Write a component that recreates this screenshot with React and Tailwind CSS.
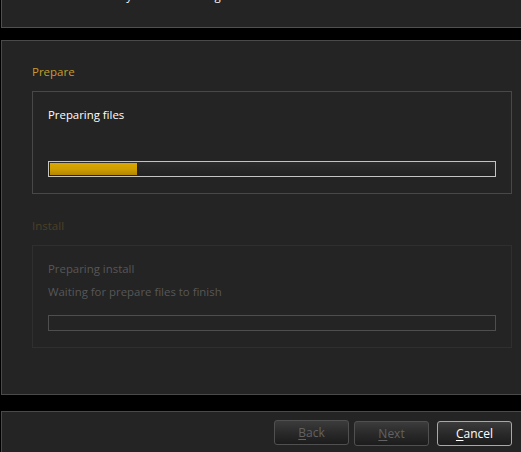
import React from 'react';

const font = { fontFamily: '"Open Sans", "Noto Sans", sans-serif' };

const Bar = ({ value, active }) => (
  <div
    className={
      'h-[16px] border p-px ' +
      (active
        ? 'border-[#c4c4c4] bg-gradient-to-b from-[#2c2c2c] to-[#222222]'
        : 'border-[#4e4e4e] bg-[#242424]')
    }
  >
    {value > 0 && (
      <div
        className="h-full bg-gradient-to-b from-[#d9a800] via-[#cf9e00] to-[#b38600]"
        style={{ width: value + '%' }}
      />
    )}
  </div>
);

const Step = ({ title, line1, line2, value, active }) => (
  <div>
    <div
      className={
        'h-4 leading-4 text-[11.5px] ' + (active ? 'text-[#c59d2c]' : 'text-[#4b4027]')
      }
    >
      {title}
    </div>
    <div
      className={
        'mt-[11px] border px-[15px] pt-[11px] pb-[16px] ' +
        (active ? 'border-[#484848]' : 'border-[#2f2f2f]')
      }
    >
      <div
        className={
          'text-[11.4px] leading-[23px] ' + (active ? 'text-white' : 'text-[#575757]')
        }
      >
        <div className="h-[23px]">{line1}</div>
        <div className="h-[23px]">{line2}</div>
      </div>
      <div className="mt-[12px]">
        <Bar value={value} active={active} />
      </div>
    </div>
  </div>
);

const Btn = ({ label, hot, enabled }) => (
  <button
    type="button"
    className={
      'w-[75px] h-[25px] rounded-[3px] border text-[12px] leading-none pt-px bg-gradient-to-b from-[#3c3c3c] via-[#2a2a2a] to-[#1c1c1c] ' +
      (enabled ? 'border-[#a8a8a8] text-white' : 'border-[#505050] text-[#626262]')
    }
  >
    <span className="underline underline-offset-2">{hot}</span>
    {label}
  </button>
);

export default function App() {
  return (
    <div className="w-[521px] h-[452px] bg-black flex flex-col overflow-hidden" style={font}>
      <div className="h-[28px] ml-px bg-[#242424] border-l border-b border-[#505050] overflow-hidden">
        <div className="text-white text-[11.4px] leading-4 pl-[31px] -mt-[12px] whitespace-nowrap">
          Please wait while your data is being loaded.
        </div>
      </div>
      <div className="mt-[12px] ml-px h-[355px] bg-[#242424] border-l border-t border-b border-[#4a4a4a] pl-[30px] pr-[9px] pt-[23px]">
        <Step title="Prepare" line1="Preparing files" line2="" value={19.6} active />
        <div className="mt-[24px]">
          <Step
            title="Install"
            line1="Preparing install"
            line2="Waiting for prepare files to finish"
            value={0}
            active={false}
          />
        </div>
      </div>
      <div className="mt-[16px] ml-px flex-1 bg-[#242424] border-l border-t border-[#4a4a4a] flex justify-end items-start pt-[8px] pr-[9px]">
        <div className="flex">
          <Btn hot="B" label="ack" />
          <div className="ml-[5px]">
            <Btn hot="N" label="ext" />
          </div>
          <div className="ml-[8px]">
            <Btn hot="C" label="ancel" enabled />
          </div>
        </div>
      </div>
    </div>
  );
}
